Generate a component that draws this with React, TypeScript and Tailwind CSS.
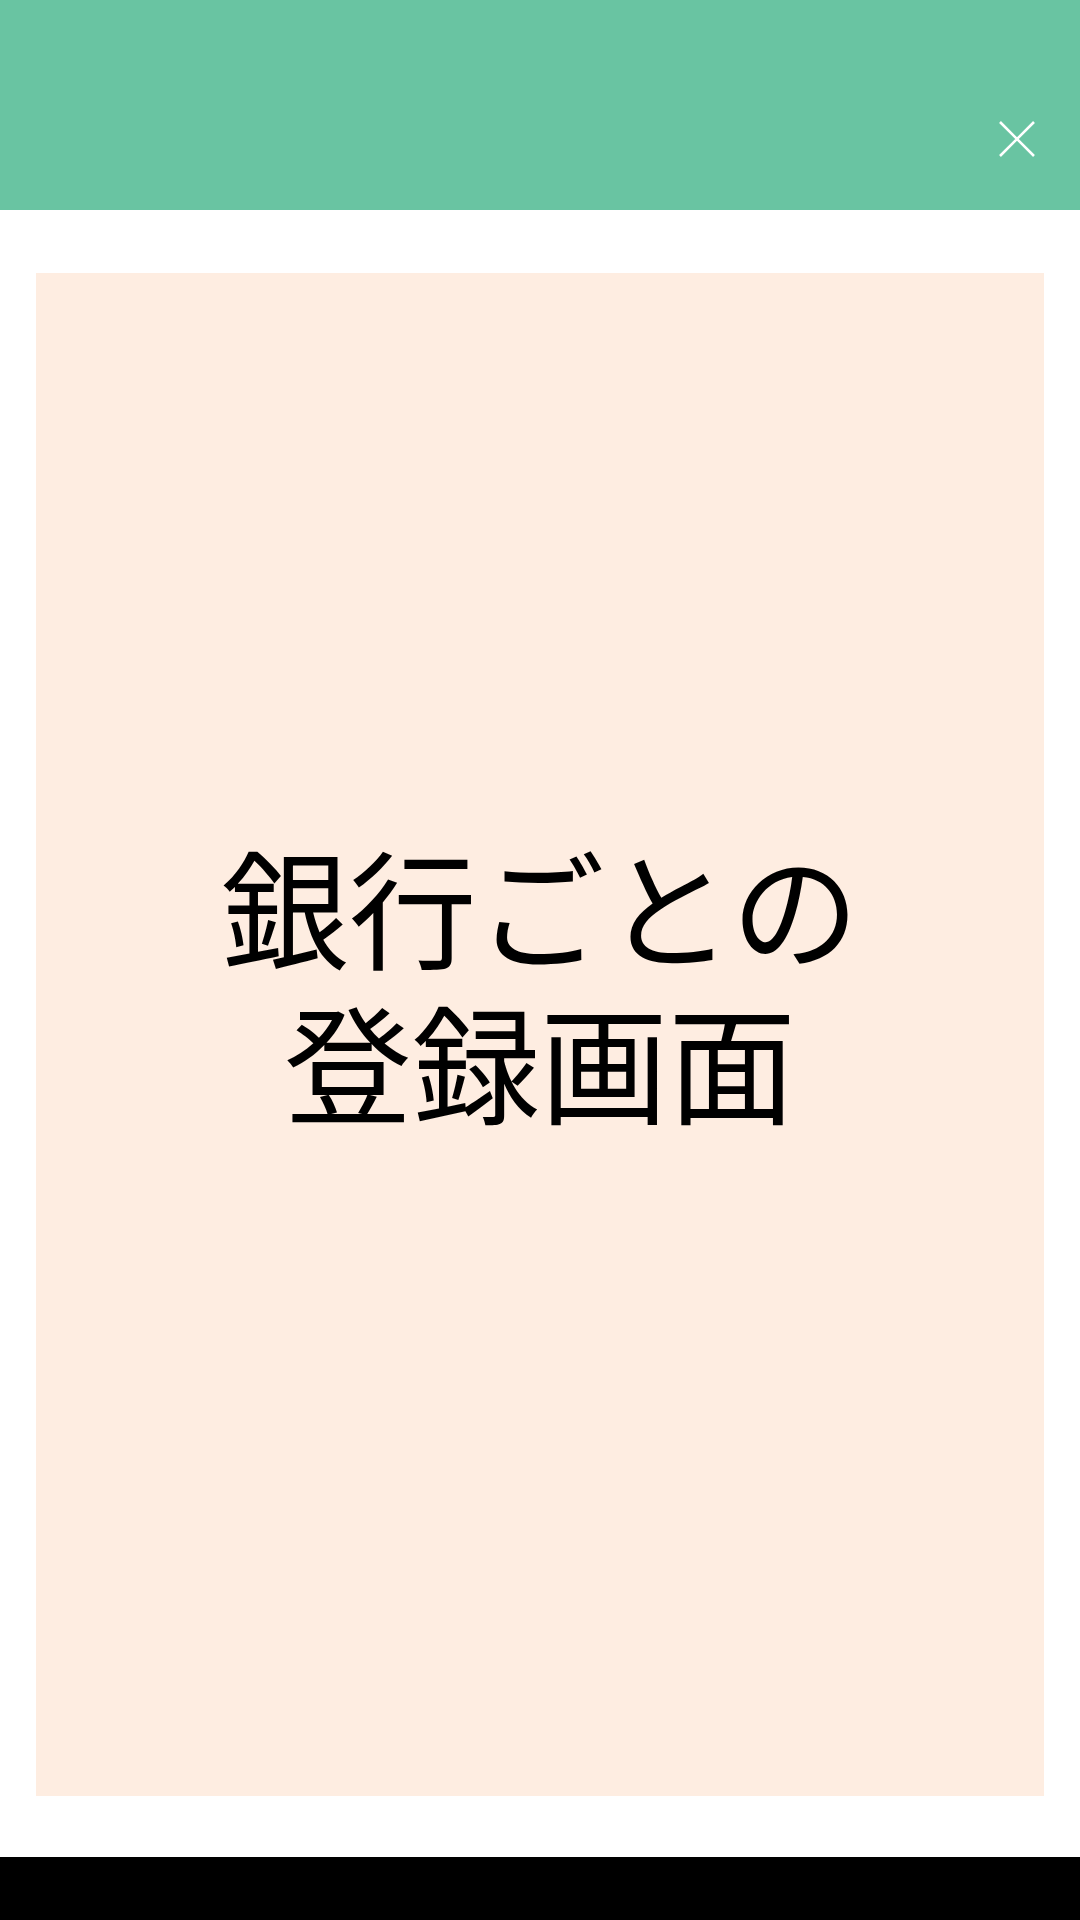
import React from 'react';

function CloseIcon() {
  return (
    <svg width="36" height="36" viewBox="0 0 36 36" fill="none" stroke="white" strokeWidth="2.6">
      <path d="M1 1L35 35M35 1L1 35" />
    </svg>
  );
}

export default function App() {
  return (
    <div
      className="flex h-[1920px] w-[1080px] flex-col bg-white"
      style={{ fontFamily: '"Noto Sans CJK JP", "Noto Sans", sans-serif' }}
    >
      <header className="flex h-[210px] shrink-0 items-end justify-end bg-[#69c4a2] pb-[53px] pr-[45px]">
        <button className="flex items-center justify-center">
          <CloseIcon />
        </button>
      </header>

      <main className="flex flex-1 px-[36px] pt-[63px] pb-[61px]">
        <div className="flex flex-1 items-center justify-center bg-[#feede1] pb-[106px]">
          <h1 className="text-center text-[128px] leading-[155px] font-normal text-black">
            銀行ごとの
            <br />
            登録画面
          </h1>
        </div>
      </main>

      <footer className="h-[63px] shrink-0 bg-black" />
    </div>
  );
}
